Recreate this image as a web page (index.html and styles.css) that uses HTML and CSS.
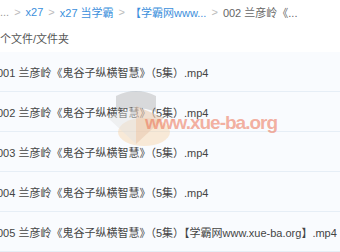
FILE: index.html
```html
<!DOCTYPE html>
<html>
<head>
<meta charset="utf-8">
<link rel="stylesheet" href="styles.css">
</head>
<body>
<div class="page">
  <div class="crumbs">
    <span class="dim">...</span><span class="sep">&gt;</span>
    <a class="link">x27</a><span class="sep">&gt;</span>
    <a class="link">x27 当学霸</a><span class="sep">&gt;</span>
    <a class="link">【学霸网www...</a><span class="sep">&gt;</span>
    <span class="cur">002 兰彦岭《...</span>
  </div>
  <div class="count">个文件/文件夹</div>
  <div class="list">
    <div class="row">001 兰彦岭《鬼谷子纵横智慧》（5集）.mp4</div>
    <div class="row">002 兰彦岭《鬼谷子纵横智慧》（5集）.mp4</div>
    <div class="row">003 兰彦岭《鬼谷子纵横智慧》（5集）.mp4</div>
    <div class="row">004 兰彦岭《鬼谷子纵横智慧》（5集）.mp4</div>
    <div class="row">005 兰彦岭《鬼谷子纵横智慧》（5集）【学霸网www.xue-ba.org】.mp4</div>
  </div>
  <div class="watermark">
    <svg class="cap" width="80" height="66" viewBox="0 0 80 66">
      <ellipse cx="48" cy="48" rx="26" ry="14" fill="#f6c98e" opacity="0.35"/>
      <path d="M20 12 Q40 2 60 12 L60 28 Q40 20 20 28 Z" fill="#8a8a8a" opacity="0.3"/>
      <path d="M12 34 L40 22 L68 34 L40 60 Z" fill="#e2e2e2" opacity="0.45"/>
      <path d="M40 22 L68 34 L40 60 Z" fill="#f2a76a" opacity="0.25"/>
    </svg>
    <span class="wm-text">www.xue-ba.org</span>
  </div>
</div>
</body>
</html>
```

FILE: styles.css
```css
html, body {
  margin: 0;
  padding: 0;
  background: #ffffff;
}
.page {
  position: relative;
  width: 340px;
  height: 252px;
  overflow: hidden;
  font-family: "Liberation Sans", "Noto Sans CJK SC", sans-serif;
  font-size: 11px;
  color: #444;
}
.crumbs {
  height: 24px;
  display: flex;
  align-items: center;
  white-space: nowrap;
}
.dim { color: #999; }
.sep {
  color: #bbb;
  margin: 0 5px;
}
.link { color: #3b8fdc; }
.cur { color: #666; }
.count {
  height: 28px;
  display: flex;
  align-items: center;
  color: #555;
}
.list {
  margin-left: -3px;
}
.row {
  height: 39px;
  border-bottom: 1px solid #e6eef6;
  display: flex;
  align-items: center;
  white-space: nowrap;
  background: #f9fbfe;
  color: #444;
}
.watermark {
  position: absolute;
  left: 96px;
  top: 84px;
  width: 190px;
  height: 70px;
  pointer-events: none;
}
.cap {
  position: absolute;
  left: 0;
  top: 0;
}
.wm-text {
  position: absolute;
  left: 49px;
  top: 28px;
  font-family: "Liberation Sans", sans-serif;
  font-weight: bold;
  font-size: 19px;
  letter-spacing: -1px;
  color: rgba(236, 110, 80, 0.55);
}
```
